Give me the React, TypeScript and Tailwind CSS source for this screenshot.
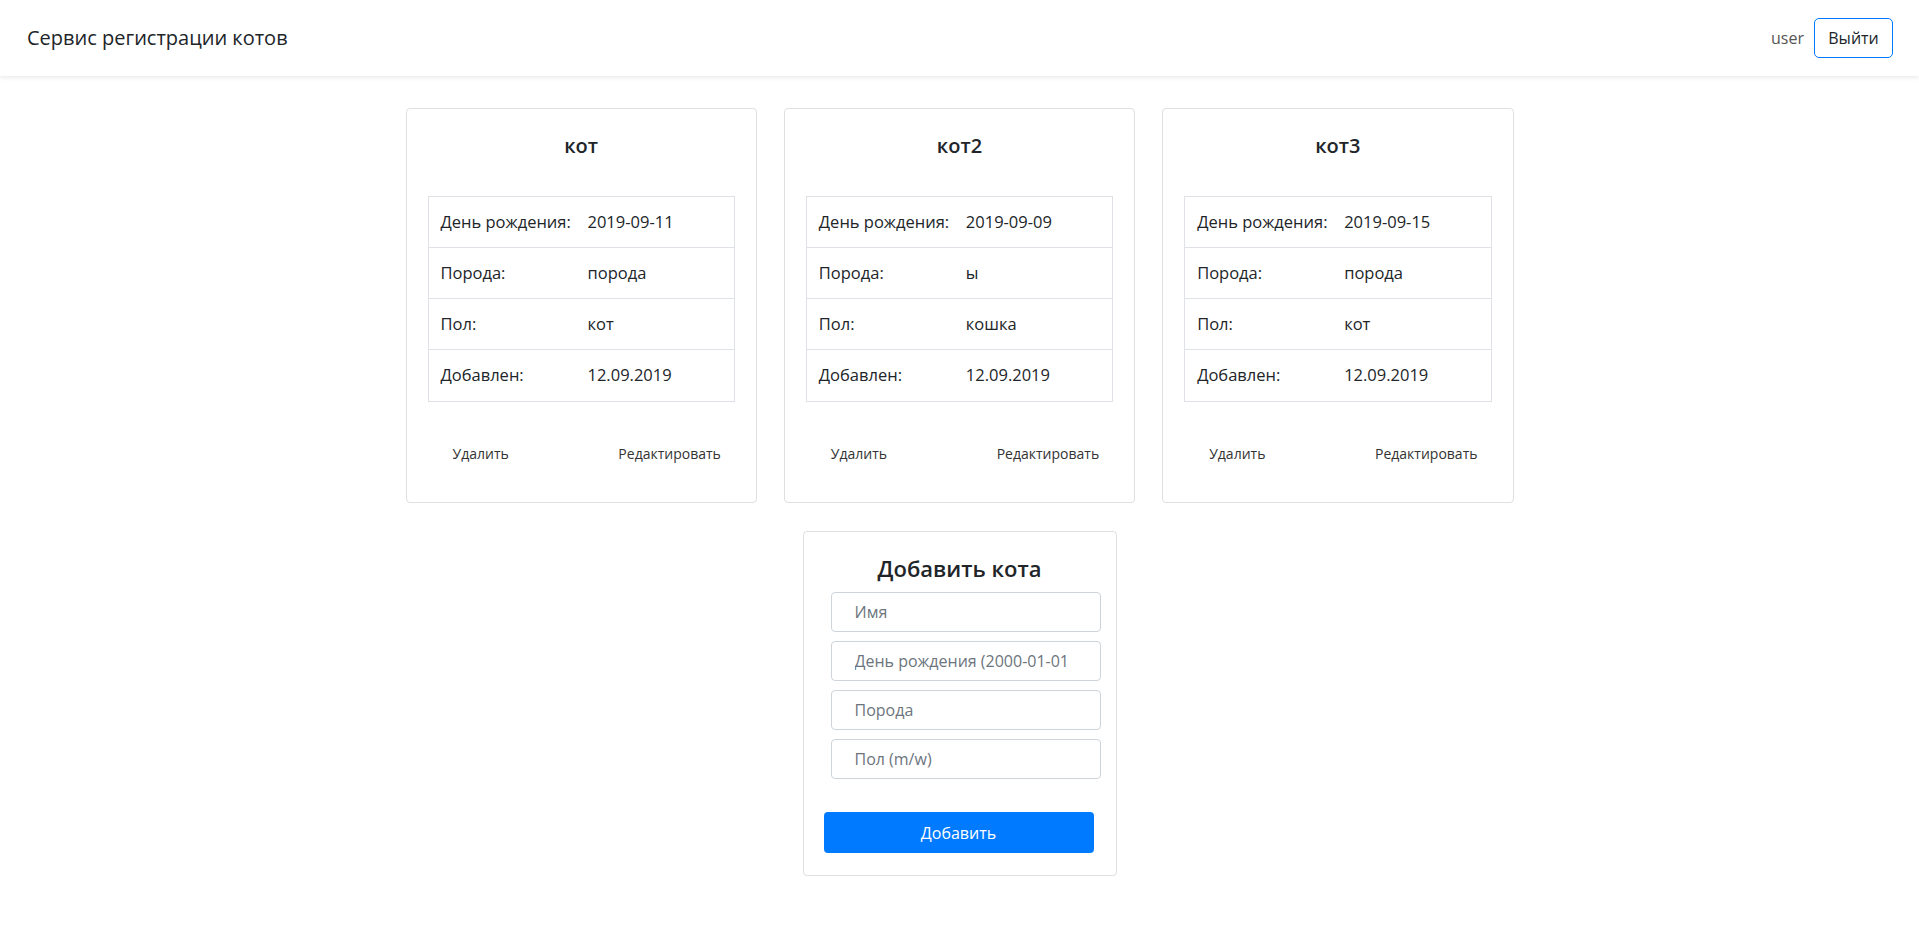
const CATS = [
  { name: "кот", birthday: "2019-09-11", breed: "порода", sex: "кот", added: "12.09.2019" },
  { name: "кот2", birthday: "2019-09-09", breed: "ы", sex: "кошка", added: "12.09.2019" },
  { name: "кот3", birthday: "2019-09-15", breed: "порода", sex: "кот", added: "12.09.2019" },
];

const CatCard = ({ cat }: { cat: (typeof CATS)[number] }) => {
  const rows = [
    ["День рождения:", cat.birthday],
    ["Порода:", cat.breed],
    ["Пол:", cat.sex],
    ["Добавлен:", cat.added],
  ];

  return (
    <div className="border border-[#dfdfdf] rounded-[4px] bg-white">
      <h5 className="pt-[25px] text-center text-[20px] leading-[24px] font-semibold text-[#212529]">{cat.name}</h5>
      <div className="mx-[21px] mt-[38px] border border-[#dee2e6] divide-y divide-[#dee2e6]">
        {rows.map(([label, value]) => (
          <div key={label} className="grid grid-cols-[147px_1fr] h-[51px] items-center text-[16.5px]">
            <span className="pl-3">{label}</span>
            <span className="pl-3">{value}</span>
          </div>
        ))}
      </div>
      <div className="flex justify-between pl-[46px] pr-[35px] mt-[42px] pb-[38px] text-[14px] leading-[20px] text-[#333]">
        <button type="button">Удалить</button>
        <button type="button">Редактировать</button>
      </div>
    </div>
  );
};

const AddCatForm = () => {
  const placeholders = ["Имя", "День рождения (2000-01-01", "Порода", "Пол (m/w)"];

  return (
    <div className="mx-auto mt-[28px] w-[314px] border border-[#dfdfdf] rounded-[4px] bg-white pt-[22px] pb-[22px]">
      <h4 className="text-center text-[22px] leading-[29px] font-semibold text-[#212529]">Добавить кота</h4>
      <div className="mt-[9px] ml-[27px] w-[270px] flex flex-col gap-[9px]">
        {placeholders.map((p) => (
          <input
            key={p}
            placeholder={p}
            className="h-[40px] w-full border border-[#ced4da] rounded-[4px] pl-[23px] pr-2 text-[16px] text-[#495057] placeholder:text-[#6c757d] outline-none"
          />
        ))}
      </div>
      <button
        type="button"
        className="mt-[33px] ml-[20px] w-[270px] h-[41px] rounded-[4px] bg-[#007bff] text-white text-[16px]"
      >
        Добавить
      </button>
    </div>
  );
};

export default function App() {
  return (
    <div className="min-h-screen bg-white text-[#212529] text-[16px]" style={{ fontFamily: '"Open Sans", "Noto Sans", sans-serif' }}>
      <nav className="h-[76px] flex items-center justify-between pl-[27px] pr-[26px] bg-white shadow-[0_2px_4px_rgba(0,0,0,0.08)]">
        <span className="text-[20px] text-[#212529]">Сервис регистрации котов</span>
        <div className="flex items-center gap-[10px]">
          <span className="text-[#555]">user</span>
          <button type="button" className="h-[40px] w-[79px] border border-[#007bff] rounded-[5px] text-[#212529]">
            Выйти
          </button>
        </div>
      </nav>

      <main className="pt-[32px] pb-10">
        <div className="mx-auto w-[1108px] grid grid-cols-3 gap-[27px]">
          {CATS.map((cat) => (
            <CatCard key={cat.name} cat={cat} />
          ))}
        </div>
        <AddCatForm />
      </main>
    </div>
  );
}
